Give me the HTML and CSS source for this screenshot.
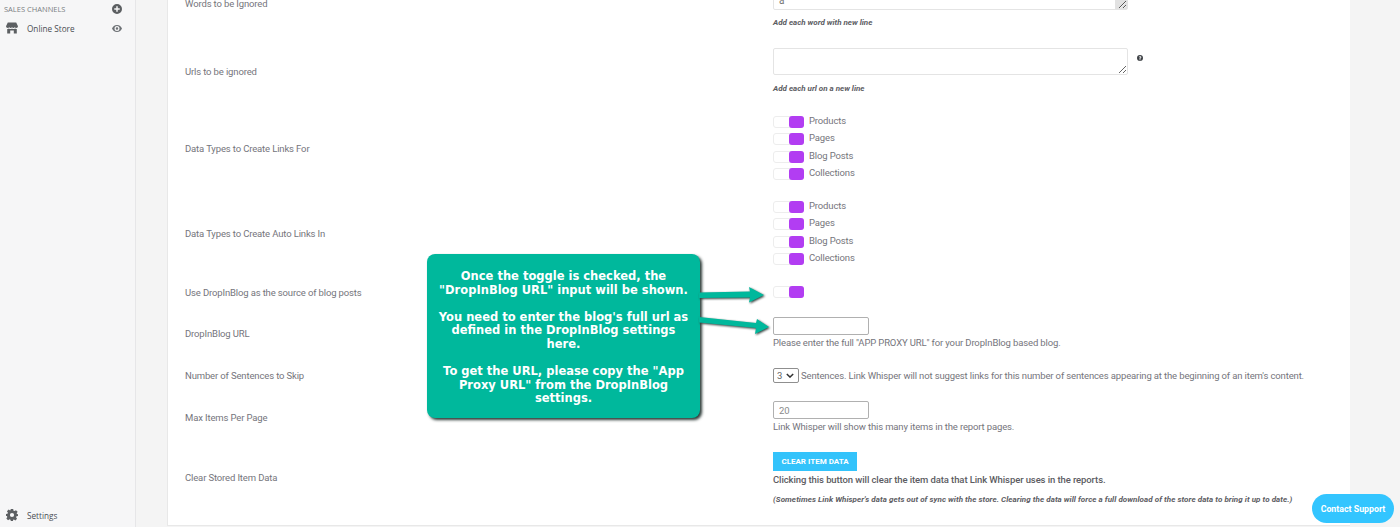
FILE: index.html
```html
<!DOCTYPE html>
<html lang="en">
<head>
    <meta charset="UTF-8">
    <title>Link Whisper Settings</title>
    <link rel="stylesheet" href="styles.css">
</head>
<body>
    <div class="shell">
        <aside class="sidebar">
            <div class="side-top">
                <div class="side-head">
                    <span>SALES CHANNELS</span>
                    <svg class="side-icon" viewBox="0 0 20 20"><path d="M10 0a10 10 0 1 0 0 20a10 10 0 0 0 0-20zM11.500 4.500v4h4v3h-4v4h-3v-4h-4v-3h4v-4z" fill-rule="evenodd"/></svg>
                </div>
                <div class="side-item">
                    <svg class="store-icon" viewBox="0 0 20 20"><path d="M3 1h14l3 6a3 3 0 0 1-3 3a3 3 0 0 1-2.500-1.300a3 3 0 0 1-4.500 0a3 3 0 0 1-4.500 0A3 3 0 0 1 3 10a3 3 0 0 1-3-3zM2 11.500a4 4 0 0 0 3-.6a4.500 4.500 0 0 0 5 0a4.500 4.500 0 0 0 5 0a4 4 0 0 0 3 .6V19h-5v-5H7v5H2z"/></svg>
                    <span class="side-label">Online Store</span>
                    <svg class="eye-icon" viewBox="0 0 20 14"><path d="M10 0C5 0 1.500 3.500 0 7c1.500 3.500 5 7 10 7s8.500-3.500 10-7c-1.500-3.500-5-7-10-7zM10 2a5 5 0 1 1 0 10a5 5 0 0 1 0-10zM10 4.500a2.500 2.500 0 1 0 0 5a2.500 2.500 0 0 0 0-5z" fill-rule="evenodd"/></svg>
                </div>
            </div>
            <div class="side-item">
                <svg class="store-icon" viewBox="0 0 20 20"><path d="M8 0h4l.5 2.800l1.700.7l2.400-1.600l2.800 2.800l-1.600 2.400l.7 1.700L20 8.300v3.400l-2.500.5l-.7 1.700l1.600 2.400l-2.800 2.800l-2.400-1.600l-1.700.7L12 20H8l-.5-2.200l-1.700-.7l-2.400 1.600l-2.800-2.800l1.600-2.400l-.7-1.700L0 11.700V8.300l2.500-.5l.7-1.700L1.600 3.700l2.800-2.800l2.400 1.600l.7-.7zM10 6.500a3.500 3.500 0 1 0 0 7a3.500 3.500 0 0 0 0-7z" fill-rule="evenodd"/></svg>
                <span class="side-label">Settings</span>
            </div>
        </aside>

        <main class="main">
            <div class="card">
                <section class="row row-words">
                    <div class="row-label">Words to be Ignored</div>
                    <div class="row-value">
                        <textarea class="area area-words">a</textarea>
                        <p class="hint">Add each word with new line</p>
                    </div>
                </section>

                <section class="row row-urls">
                    <div class="row-label">Urls to be ignored</div>
                    <div class="row-value">
                        <div class="area-line">
                            <textarea class="area"></textarea>
                            <svg class="help-icon" viewBox="0 0 20 20"><path d="M10 0a10 10 0 1 0 0 20a10 10 0 0 0 0-20zM8.500 14.500h3v3h-3zM11.500 13h-3v-1.500c0-2 3-2.500 3-4c0-1-2.500-1.200-3.500.5L5.700 6.400C7.500 3 14.500 3.500 14.500 7.500c0 2.500-3 3-3 4.500z" fill-rule="evenodd"/></svg>
                        </div>
                        <p class="hint">Add each url on a new line</p>
                    </div>
                </section>

                <section class="row row-types">
                    <div class="row-label">Data Types to Create Links For</div>
                    <div class="row-value toggles">
                        <div class="toggle-line"><span class="toggle"></span><span>Products</span></div>
                        <div class="toggle-line"><span class="toggle"></span><span>Pages</span></div>
                        <div class="toggle-line"><span class="toggle"></span><span>Blog Posts</span></div>
                        <div class="toggle-line"><span class="toggle"></span><span>Collections</span></div>
                    </div>
                </section>

                <section class="row row-auto">
                    <div class="row-label">Data Types to Create Auto Links In</div>
                    <div class="row-value toggles">
                        <div class="toggle-line"><span class="toggle"></span><span>Products</span></div>
                        <div class="toggle-line"><span class="toggle"></span><span>Pages</span></div>
                        <div class="toggle-line"><span class="toggle"></span><span>Blog Posts</span></div>
                        <div class="toggle-line"><span class="toggle"></span><span>Collections</span></div>
                    </div>
                </section>

                <section class="row row-source">
                    <div class="row-label">Use DropInBlog as the source of blog posts</div>
                    <div class="row-value"><span class="toggle"></span></div>
                </section>

                <section class="row row-url">
                    <div class="row-label">DropInBlog URL</div>
                    <div class="row-value">
                        <input class="field" type="text">
                        <p class="note">Please enter the full "APP PROXY URL" for your DropInBlog based blog.</p>
                    </div>
                </section>

                <section class="row row-skip">
                    <div class="row-label">Number of Sentences to Skip</div>
                    <div class="row-value select-line">
                        <div class="pick">
                            <select><option>3</option></select>
                            <svg class="pick-arrow" viewBox="0 0 10 6"><path d="M1 1l4 4l4-4" fill="none" stroke="#333" stroke-width="1.800"/></svg>
                        </div>
                        <span>Sentences. Link Whisper will not suggest links for this number of sentences appearing at the beginning of an item's content.</span>
                    </div>
                </section>

                <section class="row row-max">
                    <div class="row-label">Max Items Per Page</div>
                    <div class="row-value">
                        <input class="field" type="text" value="20">
                        <p class="note">Link Whisper will show this many items in the report pages.</p>
                    </div>
                </section>

                <section class="row row-clear">
                    <div class="row-label">Clear Stored Item Data</div>
                    <div class="row-value">
                        <button class="clear-btn">CLEAR ITEM DATA</button>
                        <p class="note note-strong">Clicking this button will clear the item data that Link Whisper uses in the reports.</p>
                        <p class="hint hint-wide">(Sometimes Link Whisper's data gets out of sync with the store. Clearing the data will force a full download of the store data to bring it up to date.)</p>
                    </div>
                </section>
            </div>
        </main>
    </div>

    <div class="callout">
        <p>Once the toggle is checked, the<br>"DropInBlog URL" input will be shown.</p>
        <p>You need to enter the blog's full url as<br>defined in the DropInBlog settings<br>here.</p>
        <p>To get the URL, please copy the "App<br>Proxy URL" from the DropInBlog<br>settings.</p>
    </div>

    <svg class="arrows" viewBox="0 0 1400 527">
        <path d="M699 292.500L750 291.500L749 287L764 295L749 302.500L750 297.500L699 298z"/>
        <path d="M699 317L756 323L757 319L769 327L755 334L756 328L699 322.500z"/>
    </svg>

    <button class="support">Contact Support</button>
</body>
</html>
```

FILE: styles.css
```css
* {
    box-sizing: border-box;
}
html, body {
    margin: 0;
    height: 527px;
    overflow: hidden;
}
body {
    font-family: Roboto, "Liberation Sans", sans-serif;
    font-size: 9.500px;
    letter-spacing: -.14px;
    color: #75757c;
    background: #f4f4f4;
}
p {
    margin: 0;
}
.shell {
    display: flex;
    height: 527px;
}

/* sidebar */
.sidebar {
    width: 136px;
    flex-shrink: 0;
    background: #f6f6f7;
    border-right: 1px solid #e6e6e8;
    display: flex;
    flex-direction: column;
    justify-content: space-between;
    padding: 2px 0 3px 0;
    font-family: "Open Sans", sans-serif;
    letter-spacing: 0;
}
.side-head {
    display: flex;
    justify-content: space-between;
    align-items: center;
    height: 13px;
    padding: 0 13px 0 4px;
    font-size: 7.500px;
    color: #7b7f83;
}
.side-icon {
    width: 10px;
    height: 10px;
    fill: #5c5f62;
}
.side-item {
    display: flex;
    align-items: center;
    height: 18px;
    margin-top: 4px;
    padding: 0 13px 0 6px;
    font-size: 8.200px;
    color: #4a4d52;
}
.side-label {
    flex: 1;
    margin-left: 9px;
}
.store-icon {
    width: 12px;
    height: 12px;
    fill: #5c5f62;
}
.eye-icon {
    width: 10px;
    height: 7px;
    fill: #6d7175;
}

/* settings card */
.main {
    flex: 1;
    padding: 0 50px 1px 31px;
}
.card {
    height: 100%;
    background: #fff;
    border: 1px solid #e8e8e8;
    border-width: 0 0 1px 1px;
    padding-left: 17px;
    overflow: hidden;
}
.row {
    display: grid;
    grid-template-columns: 588px 1fr;
    align-items: center;
}
.row-words {
    height: 65px;
    margin-top: -28px;
}
.row-words .row-label {
    margin-top: -2px;
}
.row-words .hint {
    margin-top: 8px;
}
.row-urls {
    height: 68px;
}
.row-urls .row-value {
    margin-top: -2px;
}
.row-types {
    height: 86px;
}
.row-auto {
    height: 84px;
}
.row-source {
    height: 33px;
}
.row-source .row-label {
    margin-top: 2px;
}
.row-url {
    height: 50px;
}
.row-skip {
    height: 34px;
}
.row-max {
    height: 50px;
}
.row-clear {
    height: 71px;
}
.area-line {
    display: flex;
    align-items: center;
    gap: 9px;
}
.area {
    display: block;
    width: 355px;
    height: 27px;
    padding: 2px 5px;
    border: 1px solid #e4e4e4;
    border-radius: 2px;
    font-family: inherit;
    font-size: 10px;
    color: #777;
    outline: 0;
}
.area-words {
    padding-top: 11px;
    background: linear-gradient(#e2e2e2, #e2e2e2) no-repeat right bottom / 12px 10px #fff;
}
.help-icon {
    width: 6px;
    height: 6px;
    fill: #3d4145;
    margin-top: -6px;
}
.hint {
    margin-top: 9px;
    font-size: 8px;
    font-style: italic;
    font-weight: 700;
    letter-spacing: 0;
    color: #5c5c62;
}
.hint-wide {
    letter-spacing: .07px;
}
.toggles {
    display: flex;
    flex-direction: column;
    gap: 5.600px;
}
.toggle-line {
    display: flex;
    align-items: flex-start;
    gap: 5px;
    height: 12px;
}
.toggle-line span:last-child {
    margin-top: -1px;
    line-height: 12px;
}
.toggle {
    display: block;
    position: relative;
    width: 31px;
    height: 12px;
    background: #fff;
    border: 1px solid #ededed;
    border-radius: 3px;
}
.toggle::after {
    content: "";
    position: absolute;
    top: -1px;
    right: -1px;
    width: 15px;
    height: 12px;
    background: #b23df2;
    border-radius: 3px;
}
.field {
    display: block;
    width: 96px;
    height: 18px;
    padding: 0 5px;
    border: 1px solid #b0b0b0;
    border-radius: 2px;
    font-family: inherit;
    font-size: 9.500px;
    color: #8a8a8a;
    outline: 0;
}
.note {
    margin-top: 1px;
    line-height: 13px;
}
.note-strong {
    margin-top: 2px;
    font-weight: 500;
    letter-spacing: -.1px;
    color: #5c5c62;
}
.select-line {
    display: flex;
    align-items: center;
    gap: 2px;
}
.pick {
    position: relative;
    width: 26px;
    height: 15px;
}
.pick select {
    display: block;
    width: 26px;
    height: 15px;
    padding: 0 0 0 3px;
    appearance: none;
    font-family: inherit;
    font-size: 9.500px;
    color: #666;
    background: #fff;
    border: 1px solid #8f8f8f;
    border-radius: 2px;
    outline: 0;
}
.pick-arrow {
    position: absolute;
    right: 5px;
    top: 5px;
    width: 8px;
    height: 5px;
}
.clear-btn {
    display: block;
    width: 84px;
    height: 19px;
    padding: 0;
    border: 0;
    background: #33c3fb;
    color: #fff;
    font-family: inherit;
    font-size: 8px;
    font-weight: 700;
    letter-spacing: 0;
}

/* tutorial overlay */
.callout {
    position: absolute;
    left: 427px;
    top: 254px;
    width: 273px;
    height: 164px;
    padding-top: 16px;
    background: #00b89c;
    border-radius: 8px;
    box-shadow: 2px 2px 3px #2c3a37;
    font-family: "DejaVu Sans", sans-serif;
    font-size: 11.500px;
    font-weight: 700;
    line-height: 13.600px;
    letter-spacing: 0;
    color: #fff;
    text-align: center;
}
.callout p + p {
    margin-top: 13.600px;
}
.arrows {
    position: absolute;
    left: 0;
    top: 0;
    width: 1400px;
    height: 527px;
    fill: #00b89c;
    filter: drop-shadow(1px 1px 1px #2c3a37);
    pointer-events: none;
}
.support {
    position: absolute;
    right: 6px;
    bottom: 4px;
    width: 82px;
    height: 29px;
    padding: 0;
    border: 0;
    border-radius: 15px;
    background: #33c5ff;
    color: #fff;
    font-family: inherit;
    font-size: 8.800px;
    font-weight: 700;
    letter-spacing: 0;
}
```
